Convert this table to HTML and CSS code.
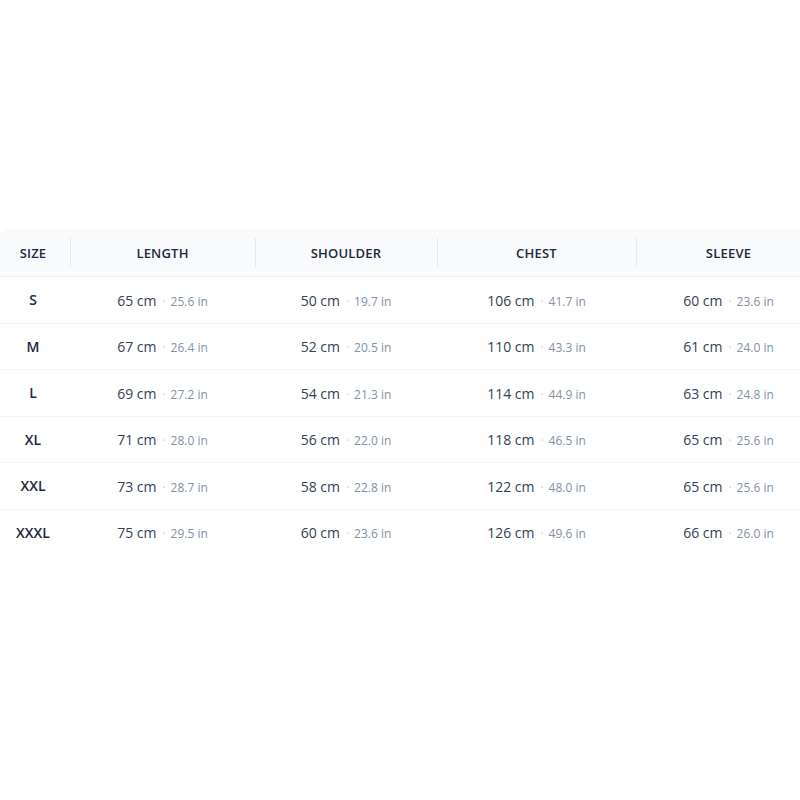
FILE: index.html
```html
<!DOCTYPE html>
<html lang="en">
<head>
<meta charset="utf-8">
<title>Size chart</title>
<link rel="stylesheet" href="styles.css">
</head>
<body>
<div class="page">
  <div class="card">
    <table class="chart">
      <thead>
        <tr>
          <th class="c-size">SIZE</th>
          <th class="c-len">LENGTH</th>
          <th class="c-sh">SHOULDER</th>
          <th class="c-ch">CHEST</th>
          <th class="c-sl">SLEEVE</th>
        </tr>
      </thead>
      <tbody>
        <tr><td class="size">S</td><td><span class="cm">65 cm</span><span class="dot">·</span><span class="in">25.6 in</span></td><td><span class="cm">50 cm</span><span class="dot">·</span><span class="in">19.7 in</span></td><td><span class="cm">106 cm</span><span class="dot">·</span><span class="in">41.7 in</span></td><td><span class="cm">60 cm</span><span class="dot">·</span><span class="in">23.6 in</span></td></tr>
        <tr><td class="size">M</td><td><span class="cm">67 cm</span><span class="dot">·</span><span class="in">26.4 in</span></td><td><span class="cm">52 cm</span><span class="dot">·</span><span class="in">20.5 in</span></td><td><span class="cm">110 cm</span><span class="dot">·</span><span class="in">43.3 in</span></td><td><span class="cm">61 cm</span><span class="dot">·</span><span class="in">24.0 in</span></td></tr>
        <tr><td class="size">L</td><td><span class="cm">69 cm</span><span class="dot">·</span><span class="in">27.2 in</span></td><td><span class="cm">54 cm</span><span class="dot">·</span><span class="in">21.3 in</span></td><td><span class="cm">114 cm</span><span class="dot">·</span><span class="in">44.9 in</span></td><td><span class="cm">63 cm</span><span class="dot">·</span><span class="in">24.8 in</span></td></tr>
        <tr><td class="size">XL</td><td><span class="cm">71 cm</span><span class="dot">·</span><span class="in">28.0 in</span></td><td><span class="cm">56 cm</span><span class="dot">·</span><span class="in">22.0 in</span></td><td><span class="cm">118 cm</span><span class="dot">·</span><span class="in">46.5 in</span></td><td><span class="cm">65 cm</span><span class="dot">·</span><span class="in">25.6 in</span></td></tr>
        <tr><td class="size">XXL</td><td><span class="cm">73 cm</span><span class="dot">·</span><span class="in">28.7 in</span></td><td><span class="cm">58 cm</span><span class="dot">·</span><span class="in">22.8 in</span></td><td><span class="cm">122 cm</span><span class="dot">·</span><span class="in">48.0 in</span></td><td><span class="cm">65 cm</span><span class="dot">·</span><span class="in">25.6 in</span></td></tr>
        <tr><td class="size">XXXL</td><td><span class="cm">75 cm</span><span class="dot">·</span><span class="in">29.5 in</span></td><td><span class="cm">60 cm</span><span class="dot">·</span><span class="in">23.6 in</span></td><td><span class="cm">126 cm</span><span class="dot">·</span><span class="in">49.6 in</span></td><td><span class="cm">66 cm</span><span class="dot">·</span><span class="in">26.0 in</span></td></tr>
      </tbody>
    </table>
  </div>
</div>
</body>
</html>
```
FILE: styles.css
```css
html, body {
  margin: 0;
  padding: 0;
  background: #ffffff;
  overflow: hidden;
}
body {
  font-family: "Open Sans", "Noto Sans", sans-serif;
  color: #334155;
}
.page {
  padding-top: 230px;
  width: 800px;
  height: 800px;
  box-sizing: border-box;
}
.card {
  width: 821px;
  border-radius: 8px;
  box-shadow: 0 0 2px rgba(15, 23, 42, 0.06);
  overflow: hidden;
  background: #ffffff;
}
.chart {
  width: 821px;
  border-collapse: collapse;
  table-layout: fixed;
}
.c-size { width: 66px; }
.c-len { width: 185px; }
.c-sh { width: 182px; }
.c-ch { width: 199px; }
.c-sl { width: 185px; }
.chart th {
  position: relative;
  background: #f8fafc;
  height: 46px;
  padding: 0;
  font-size: 13px;
  font-weight: 600;
  letter-spacing: 0.2px;
  color: #1e293b;
  text-align: center;
  border-bottom: 1px solid #eef2f6;
}
.chart th + th::before {
  content: "";
  position: absolute;
  left: 0;
  top: 8px;
  bottom: 9px;
  width: 1px;
  background: #e5e9ef;
}
.chart th.c-size {
  padding-right: 4px;
}
.chart td {
  height: 45.5px;
  padding: 0;
  text-align: center;
  border-bottom: 1px solid #f1f4f8;
  white-space: nowrap;
}
.chart tr:last-child td {
  border-bottom: none;
}
.chart td.size {
  font-size: 14px;
  font-weight: 600;
  color: #1e293b;
  padding-right: 4px;
}
.cm {
  font-size: 14px;
  color: #334155;
}
.dot {
  font-size: 12px;
  color: #cbd5e1;
  margin: 0 5px 0 6px;
}
.in {
  font-size: 12px;
  color: #8391a5;
}
```
